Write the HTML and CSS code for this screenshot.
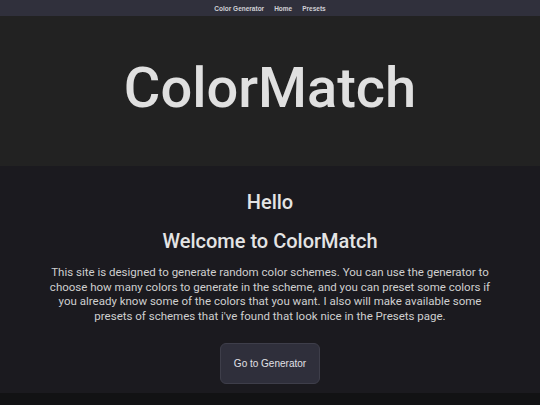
FILE: index.html
```html
<!DOCTYPE html>
<html lang="en">
<head>
    <meta charset="UTF-8">
    <meta name="viewport" content="width=device-width, initial-scale=1.0">
    <title>ColorMatch</title>
    <link rel="stylesheet" href="styles.css">
</head>
<body>
    <!-- Navigation -->
    <nav class="navbar">
        <a href="#">Color Generator</a>
        <a href="#">Home</a>
        <a href="#">Presets</a>
    </nav>

    <!-- Header -->
    <header class="header">
        <h1>ColorMatch</h1>
    </header>

    <!-- Main content -->
    <main class="main">
        <h2 class="hello">Hello</h2>
        <h2 class="welcome">Welcome to ColorMatch</h2>
        <p class="intro">This site is designed to generate random color schemes. You can use the generator to choose how many colors to generate in the scheme, and you can preset some colors if you already know some of the colors that you want. I also will make available some presets of schemes that i've found that look nice in the Presets page.</p>
        <button class="btn">Go to Generator</button>
    </main>
</body>
</html>
```

FILE: styles.css
```css
body {
    margin: 0;
    background-color: #121214;
    font-family: 'Roboto', 'Liberation Sans', sans-serif;
    color: #e0e0e0;
}

.navbar {
    height: 16px;
    display: flex;
    justify-content: center;
    align-items: center;
    gap: 10px;
    background-color: #30303c;
}

.navbar a {
    font-family: 'Liberation Sans', Arial, sans-serif;
    font-size: 6.5px;
    font-weight: bold;
    color: #d0d0d6;
    text-decoration: none;
}

.header {
    height: 150px;
    display: flex;
    justify-content: center;
    align-items: center;
    background-color: #222222;
}

.header h1 {
    margin: 0 0 6px 0;
    font-size: 56px;
    font-weight: 500;
    color: #e0e0e0;
}

.main {
    background-color: #1b1a1f;
    text-align: center;
    padding: 24px 0 9px 0;
}

.main h2 {
    margin: 0;
    font-size: 20px;
    font-weight: 500;
    color: #e4e4e4;
}

.welcome {
    margin-top: 15px !important;
}

.intro {
    max-width: 446px;
    margin: 12px auto 20px auto;
    font-size: 11.5px;
    line-height: 14.5px;
    color: #cfcfcf;
}

.btn {
    font-family: 'Liberation Sans', Arial, sans-serif;
    font-size: 10px;
    color: #e0e0e6;
    background-color: #2f2f3b;
    border: 1px solid #3e3e4a;
    border-radius: 6px;
    padding: 14px 13px;
    cursor: pointer;
}
```
